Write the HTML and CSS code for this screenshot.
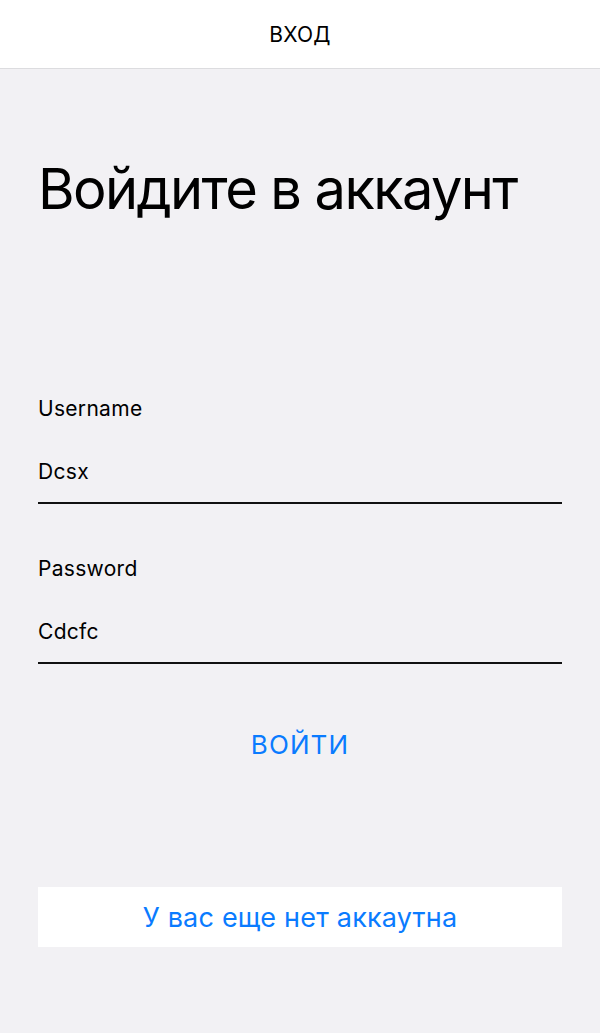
FILE: index.html
```html
<!DOCTYPE html>
<html lang="ru">
<head>
<meta charset="utf-8">
<title>Вход</title>
<link rel="stylesheet" href="styles.css">
</head>
<body>
<header class="navbar">ВХОД</header>
<main class="content">
  <h1 class="title">Войдите в аккаунт</h1>
  <form class="form">
    <div class="field">
      <label class="field-label">Username</label>
      <div class="field-input">Dcsx</div>
    </div>
    <div class="field">
      <label class="field-label">Password</label>
      <div class="field-input">Cdcfc</div>
    </div>
    <button type="button" class="login-btn">ВОЙТИ</button>
  </form>
  <button type="button" class="register-btn">У вас еще нет аккаутна</button>
</main>
</body>
</html>
```

FILE: styles.css
```css
* { box-sizing: border-box; }
html, body {
  margin: 0;
  padding: 0;
  background: #f2f1f4;
  font-family: Inter, "Noto Sans", "DejaVu Sans", sans-serif;
  color: #000;
}
.navbar {
  height: 69px;
  background: #fff;
  border-bottom: 1px solid #dcdcdf;
  display: flex;
  align-items: center;
  justify-content: center;
  font-size: 21px;
  letter-spacing: 0.2px;
  padding-top: 1px;
}
.content {
  padding: 0 38px;
  display: flex;
  flex-direction: column;
}
.title {
  margin: 87px 0 0;
  font-size: 56px;
  font-weight: 400;
  line-height: 67px;
  letter-spacing: -1.6px;
}
.form {
  display: flex;
  flex-direction: column;
  margin-top: 174px;
}
.field {
  display: flex;
  flex-direction: column;
  margin-bottom: 53px;
}
.field-label {
  font-size: 21px;
  line-height: 24px;
  letter-spacing: 0.3px;
}
.field-input {
  margin-top: 39px;
  font-size: 21px;
  line-height: 24px;
  letter-spacing: 0.3px;
  padding-bottom: 18px;
  border-bottom: 2px solid #111;
}
.login-btn {
  margin-top: 12px;
  background: none;
  border: 0;
  padding: 0;
  font-family: inherit;
  font-size: 26px;
  line-height: 32px;
  color: #0a7bff;
  letter-spacing: 1.1px;
  cursor: pointer;
}
.register-btn {
  margin-top: 126px;
  height: 60px;
  background: #fff;
  border: 0;
  font-family: inherit;
  font-size: 27px;
  letter-spacing: 0.2px;
  color: #0a7bff;
  cursor: pointer;
}
```
